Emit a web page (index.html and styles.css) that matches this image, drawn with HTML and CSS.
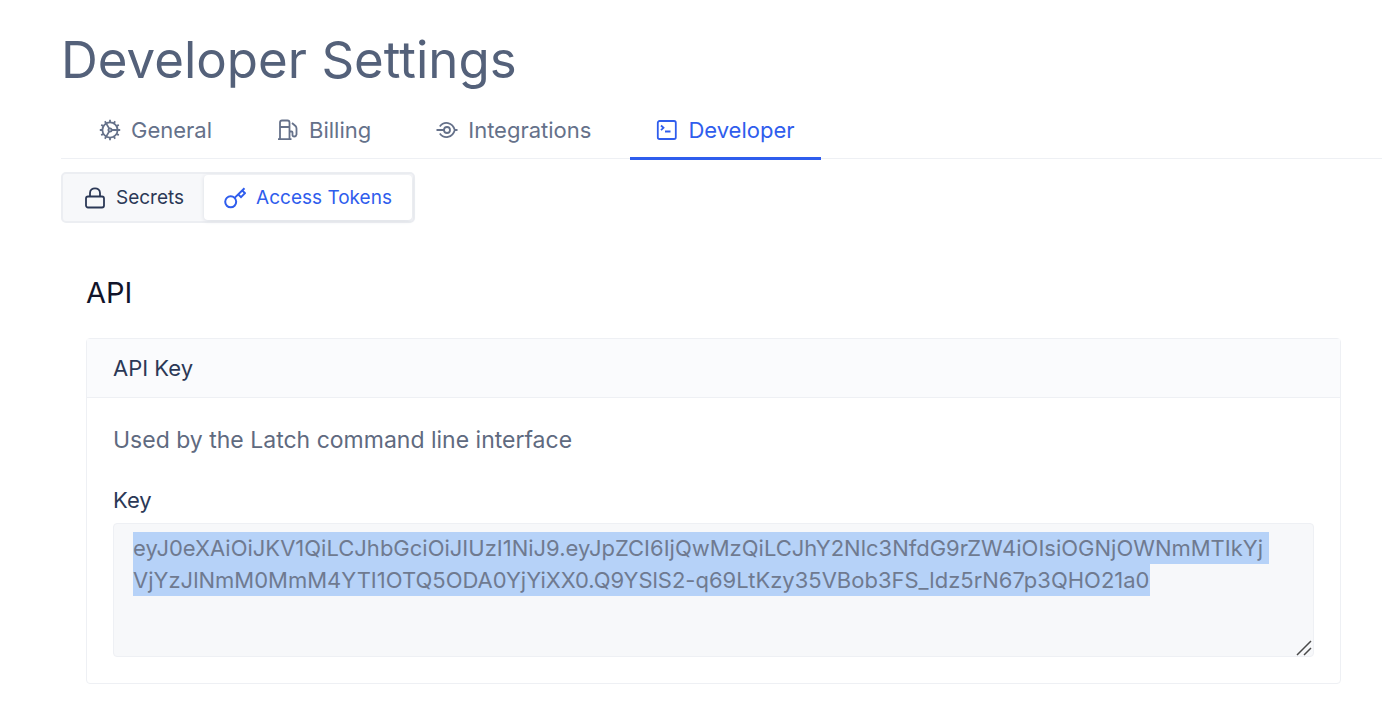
FILE: index.html
```html
<!DOCTYPE html>
<html lang="en">
<head>
<meta charset="utf-8">
<title>Developer Settings</title>
<link rel="stylesheet" href="styles.css">
</head>
<body>
<main class="page">
  <h1 class="title">Developer Settings</h1>
  <nav class="tabs" aria-label="Settings">
    <a class="tab" href="#general">
      <svg class="icon" viewBox="0 0 22 22" aria-hidden="true"><circle cx="11" cy="11" r="7.6"/><circle cx="11" cy="11" r="1.6"/><path d="M12.8 11H18.4M10.1 9.4 7.3 4.6M10.1 12.6 7.3 17.4M11 3.6V.8M11 18.400v2.800M3.600 11H.8M18.400 11h2.800M14.700 4.600 16.100 2.200M7.300 4.600 5.900 2.200M14.700 17.400l1.400 2.400M7.300 17.400l-1.400 2.400M17.400 7.300l2.400-1.400M4.600 7.300 2.200 5.900M17.400 14.700l2.400 1.400M4.600 14.700l-2.400 1.400"/></svg>
      General
    </a>
    <a class="tab" href="#billing">
      <svg class="icon" viewBox="0 0 22 22" aria-hidden="true"><path d="M3 20V3.500Q3 1.500 5 1.500H10.500Q12.500 1.500 12.500 3.500V20M1 20.200H14.500M3 8H12.500M12.500 12.500H14.500Q15.500 12.500 15.500 13.500V16Q15.500 17.500 17.300 17.500T19.500 15.500V9.500Q19.500 8 18.500 7L15 4"/></svg>
      Billing
    </a>
    <a class="tab" href="#integrations">
      <svg class="icon" viewBox="0 0 22 22" aria-hidden="true"><circle cx="11" cy="11" r="3"/><path d="M.5 11H8M3.800 7.500C8 1.800 16.500 2.800 18.800 11C16.500 19.200 8 20.200 3.800 14.500M18.800 11H21.500"/></svg>
      Integrations
    </a>
    <a class="tab tab-active" href="#developer" aria-current="page">
      <svg class="icon" viewBox="0 0 22 22" aria-hidden="true"><rect x="1.800" y="2" width="18" height="18" rx="1.800"/><path d="M5 6.500 7.500 8.800 5 11.200M9 12.500H14.500"/></svg>
      Developer
    </a>
  </nav>
  <div class="segments">
    <button class="segment" type="button">
      <svg class="icon" viewBox="0 0 22 22" aria-hidden="true"><rect x="2" y="9.500" width="18" height="11" rx="2"/><path d="M6 9.500V6C6 -.300 16 -.300 16 6V9.500"/></svg>
      Secrets
    </button>
    <button class="segment segment-active" type="button" aria-pressed="true">
      <svg class="icon icon-key" viewBox="0 0 22 22" aria-hidden="true"><circle cx="6.700" cy="14.800" r="5.500"/><path d="M10.600 10.900 20.500 1.200M14.200 7.400 17 10.200 21 6.200 18.200 3.400"/></svg>
      Access Tokens
    </button>
  </div>
  <section class="section">
    <h2 class="section-title">API</h2>
    <div class="card">
      <h3 class="card-header">API Key</h3>
      <div class="card-body">
        <p class="description">Used by the Latch command line interface</p>
        <label class="label" for="key">Key</label>
        <div class="field">
          <textarea class="key" id="key" readonly spellcheck="false">eyJ0eXAiOiJKV1QiLCJhbGciOiJIUzI1NiJ9.eyJpZCI6IjQwMzQiLCJhY2Nlc3NfdG9rZW4iOIsiOGNjOWNmMTIkYjVjYzJlNmM0MmM4YTI1OTQ5ODA0YjYiXX0.Q9YSlS2-q69LtKzy35VBob3FS_ldz5rN67p3QHO21a0</textarea>
          <svg class="grip" viewBox="0 0 16 16" aria-hidden="true"><path d="M1 15 15 1M8 15 15 8"/></svg>
        </div>
      </div>
    </div>
  </section>
</main>
<script src="script.js"></script>
</body>
</html>
```
FILE: styles.css
```css
* { box-sizing: border-box; }
body {
  margin: 0;
  background: #fff;
  color: #2b3856;
  font-family: Inter, "Liberation Sans", sans-serif;
  font-size: 22px;
  font-weight: 400;
  line-height: 32px;
}
h1, h2, h3, p { margin: 0; font-weight: 400; }
.page { padding: 28px 0 40px 61px; }
.title { color: #54617a; font-size: 51px; line-height: 64px; }
.tabs {
  display: flex;
  gap: 13px;
  margin-top: 11px;
  padding-left: 12px;
  border-bottom: 1px solid #eef0f4;
}
.tab {
  display: flex;
  align-items: center;
  gap: 10px;
  height: 57px;
  margin-bottom: -2px;
  padding: 0 26px;
  border-bottom: 3px solid transparent;
  color: #65718a;
  text-decoration: none;
}
.tab-active { color: #2f5ded; border-color: #2f5ded; }
.icon {
  flex: none;
  width: 22px;
  height: 22px;
  fill: none;
  stroke: currentColor;
  stroke-width: 1.8;
}
.icon-key { stroke-width: 2; }
.segments {
  display: inline-flex;
  margin-top: 13px;
  padding: 1px;
  border: 2px solid #eceef2;
  border-radius: 5px;
  background: #f7f8fa;
}
.segment {
  display: flex;
  align-items: center;
  gap: 10px;
  height: 45px;
  padding: 0 20px;
  border: 0;
  border-radius: 4px;
  background: transparent;
  color: #2b3856;
  font: inherit;
  font-size: 19px;
}
.segment-active {
  background: #fff;
  color: #2f5ded;
  box-shadow: 0 1px 4px #d9dce3;
}
.section { margin: 50px 41px 0 25px; }
.section-title { color: #11142a; font-size: 29px; line-height: 40px; }
.card { margin-top: 25px; border: 1px solid #eef0f4; border-radius: 4px; }
.card-header {
  padding: 13px 26px;
  border-bottom: 1px solid #eef0f4;
  background: #fafbfd;
  font-size: 22px;
}
.card-body { padding: 26px; }
.description { color: #5f6a80; font-size: 23px; }
.label { display: block; margin-top: 28px; }
.field { position: relative; margin-top: 7px; }
.key {
  display: block;
  width: 100%;
  height: 134px;
  padding: 8px 40px 8px 19px;
  border: 1px solid #eef0f4;
  border-radius: 4px;
  outline: 0;
  resize: none;
  background: #f7f8fa;
  color: #6f7a90;
  font: inherit;
  word-break: break-all;
}
.key::selection { background: #b6d2f8; color: #6f7a90; }
.grip {
  position: absolute;
  right: 2px;
  bottom: 1px;
  width: 16px;
  height: 16px;
  stroke: #4a4a4a;
  stroke-width: 1.5;
  pointer-events: none;
}
```
FILE: script.js
```js
const key = document.getElementById("key");
key.focus();
key.select();
```
